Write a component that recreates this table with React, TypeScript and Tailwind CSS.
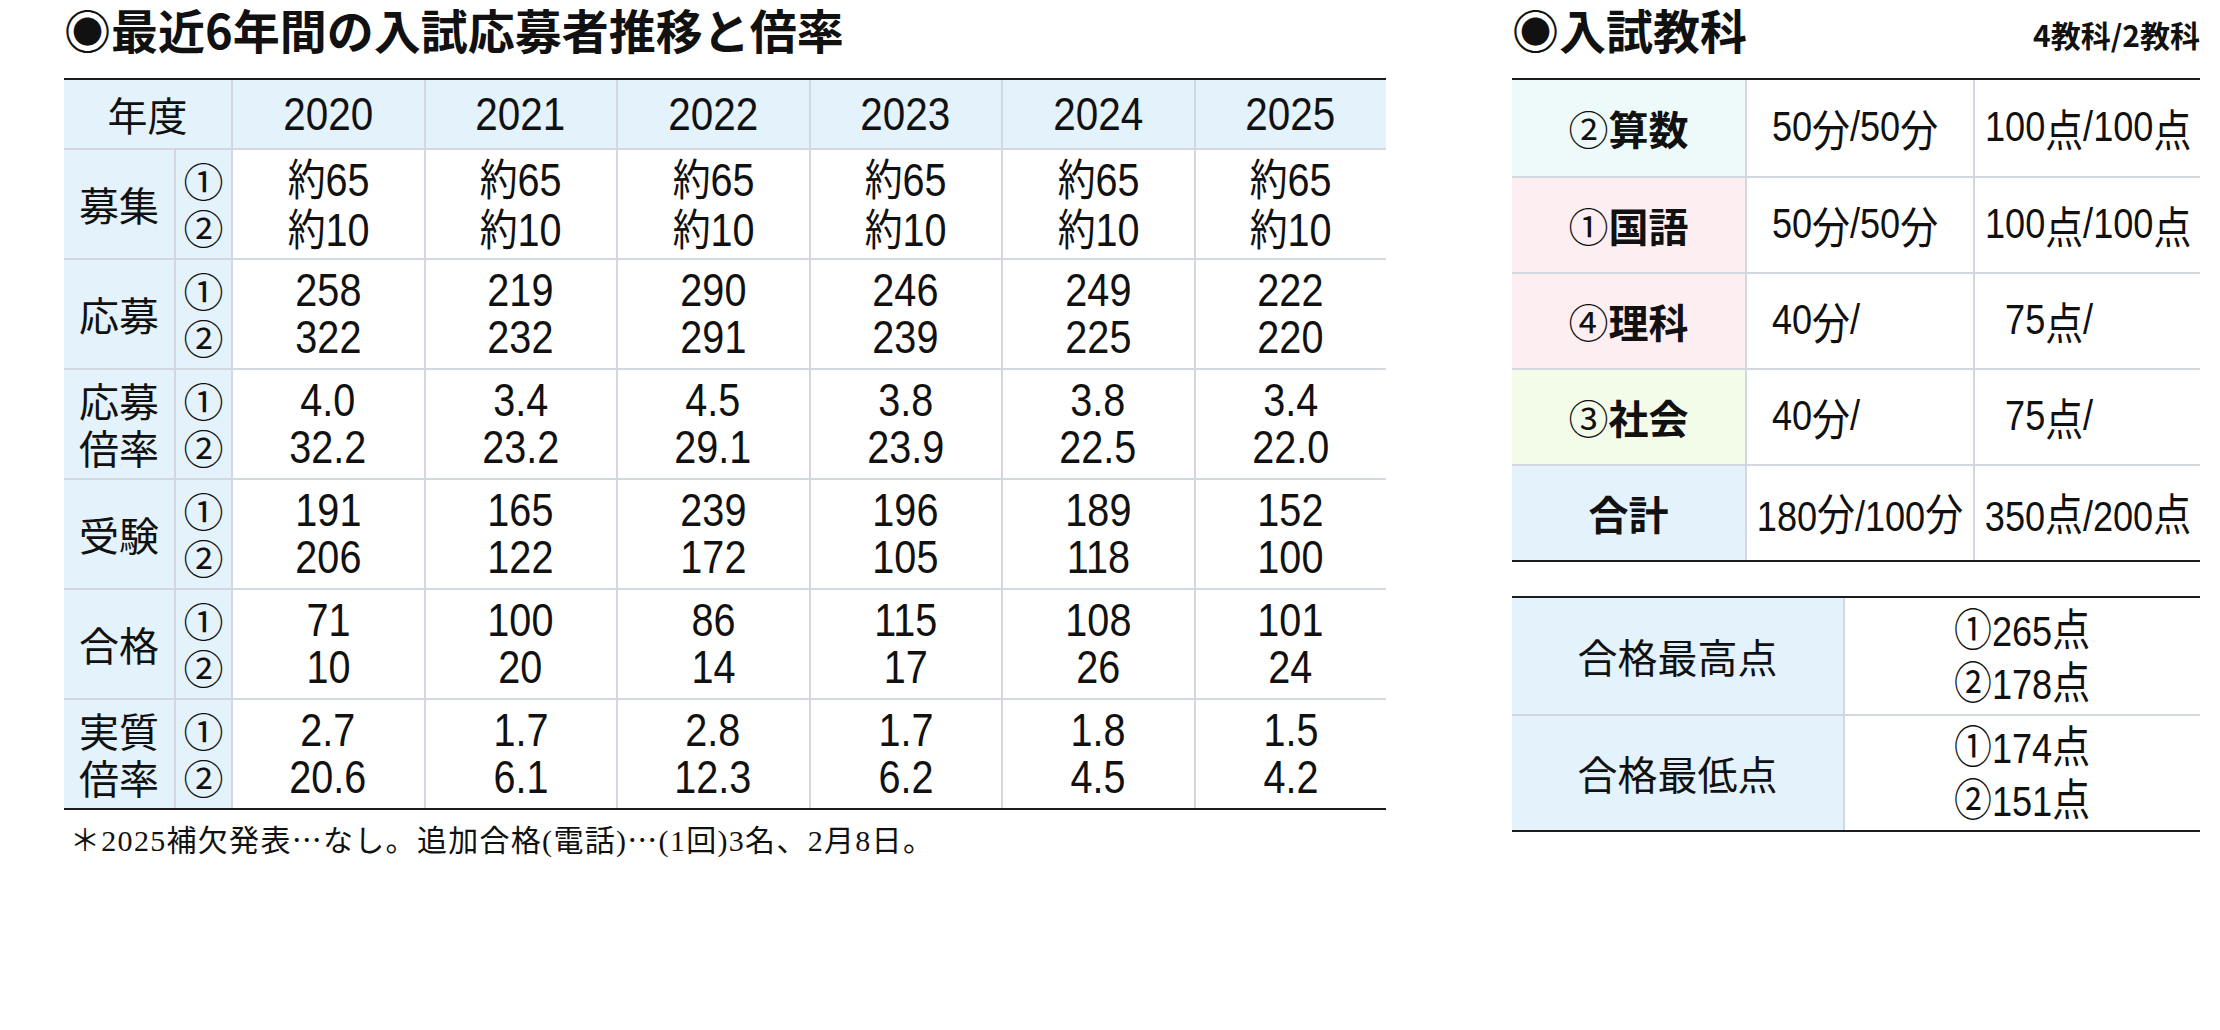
import React from "react";

const NUM = "font-['Liberation_Sans_Narrow','Liberation_Sans','Noto_Sans_CJK_JP',sans-serif]";
const JP = "font-['Noto_Sans_CJK_JP',sans-serif]";
const LINE = "border-[#d3d7df]";
// no narrow face installed, so squeeze the figures a little
const SQUEEZE = "shrink-0 whitespace-nowrap scale-x-[0.86]";

const years = ["2020", "2021", "2022", "2023", "2024", "2025"];

const rows = [
  {
    label: ["募集"],
    vals: [
      ["約65", "約10"],
      ["約65", "約10"],
      ["約65", "約10"],
      ["約65", "約10"],
      ["約65", "約10"],
      ["約65", "約10"],
    ],
  },
  {
    label: ["応募"],
    vals: [
      ["258", "322"],
      ["219", "232"],
      ["290", "291"],
      ["246", "239"],
      ["249", "225"],
      ["222", "220"],
    ],
  },
  {
    label: ["応募", "倍率"],
    vals: [
      ["4.0", "32.2"],
      ["3.4", "23.2"],
      ["4.5", "29.1"],
      ["3.8", "23.9"],
      ["3.8", "22.5"],
      ["3.4", "22.0"],
    ],
  },
  {
    label: ["受験"],
    vals: [
      ["191", "206"],
      ["165", "122"],
      ["239", "172"],
      ["196", "105"],
      ["189", "118"],
      ["152", "100"],
    ],
  },
  {
    label: ["合格"],
    vals: [
      ["71", "10"],
      ["100", "20"],
      ["86", "14"],
      ["115", "17"],
      ["108", "26"],
      ["101", "24"],
    ],
  },
  {
    label: ["実質", "倍率"],
    vals: [
      ["2.7", "20.6"],
      ["1.7", "6.1"],
      ["2.8", "12.3"],
      ["1.7", "6.2"],
      ["1.8", "4.5"],
      ["1.5", "4.2"],
    ],
  },
];

const subjects = [
  { no: "②", name: "算数", bg: "bg-[#edfaf9]", time: ["50分/", "50分"], score: ["100点/", "100点"] },
  { no: "①", name: "国語", bg: "bg-[#fdeef1]", time: ["50分/", "50分"], score: ["100点/", "100点"] },
  { no: "④", name: "理科", bg: "bg-[#fdeef1]", time: ["40分/", ""], score: ["75点/", ""] },
  { no: "③", name: "社会", bg: "bg-[#f3fce9]", time: ["40分/", ""], score: ["75点/", ""] },
];

function Mixed({ text }: { text: string }) {
  const parts = text.split(/([^\x00-\x7F]+)/).filter(Boolean);
  return (
    <>
      {parts.map((p, i) =>
        /[^\x00-\x7F]/.test(p) ? (
          <span key={i} className={`${JP} text-[44px]`}>
            {p}
          </span>
        ) : (
          <span key={i}>{p}</span>
        )
      )}
    </>
  );
}

function Split({ pair, lw, rw }: { pair: string[]; lw: string; rw: string }) {
  return (
    <div className={`flex ${SQUEEZE}`}>
      <div className={`${lw} flex shrink-0 justify-end`}>
        <Mixed text={pair[0]} />
      </div>
      <div className={`${rw} flex shrink-0 justify-start`}>
        <Mixed text={pair[1]} />
      </div>
    </div>
  );
}

export default function App() {
  return (
    <div className="flex h-[1030px] w-[2220px] bg-white text-[#111]">
      {/* left: applicants table */}
      <div className="ml-[64px] w-[1322px] shrink-0">
        <div className={`h-[78px] pt-[5px] text-[47px] font-bold leading-none ${JP}`}>
          ◉最近6年間の入試応募者推移と倍率
        </div>

        <div className="border-y-2 border-[#1c1c1c]">
          <div className="flex h-[68px] bg-[#e4f2fb]">
            <div className={`flex w-[167px] shrink-0 items-center justify-center text-[40px] ${JP}`}>
              年度
            </div>
            {years.map((y) => (
              <div
                key={y}
                className={`flex min-w-0 flex-1 items-center justify-center border-l-2 ${LINE} text-[47px] ${NUM}`}
              >
                <div className={SQUEEZE}>{y}</div>
              </div>
            ))}
          </div>

          {rows.map((row, ri) => (
            <div key={ri} className={`flex h-[110px] border-t-2 ${LINE}`}>
              <div
                className={`flex w-[110px] shrink-0 flex-col items-center justify-center bg-[#e4f2fb] text-[40px] leading-[47px] ${JP}`}
              >
                {row.label.map((l) => (
                  <div key={l}>{l}</div>
                ))}
              </div>
              <div
                className={`flex w-[57px] shrink-0 flex-col items-center justify-center border-l-2 ${LINE} bg-[#e4f2fb] text-[40px] leading-[47px] ${JP}`}
              >
                <div>①</div>
                <div>②</div>
              </div>
              {row.vals.map((v, ci) => (
                <div
                  key={ci}
                  className={`flex min-w-0 flex-1 items-center justify-center border-l-2 ${LINE} text-[46px] leading-[47px] ${NUM}`}
                >
                  <div className={`flex flex-col items-center ${SQUEEZE}`}>
                    <div>
                      <Mixed text={v[0]} />
                    </div>
                    <div>
                      <Mixed text={v[1]} />
                    </div>
                  </div>
                </div>
              ))}
            </div>
          ))}
        </div>

        <div className="mt-[13px] pl-[6px] font-['Liberation_Serif','Noto_Sans_CJK_JP',serif] text-[30px] leading-none tracking-[1.3px]">
          ＊2025補欠発表<span className={JP}>…</span>なし。追加合格(電話)<span className={JP}>…</span>
          (1回)3名、2月8日。
        </div>
      </div>

      {/* right: subjects */}
      <div className="ml-[126px] w-[688px] shrink-0">
        <div className={`flex h-[78px] items-start justify-between pt-[5px] leading-none ${JP}`}>
          <span className="text-[47px] font-bold">◉入試教科</span>
          <span className="mt-[14px] text-[30px] font-bold">4教科/2教科</span>
        </div>

        <div className="border-y-2 border-[#1c1c1c]">
          {subjects.map((s, i) => (
            <div key={s.name} className={`flex h-[96px] ${i > 0 ? `border-t-2 ${LINE}` : ""}`}>
              <div
                className={`flex w-[233px] shrink-0 items-center justify-center ${s.bg} text-[40px] ${JP}`}
              >
                <span>{s.no}</span>
                <span className="font-bold">{s.name}</span>
              </div>
              <div
                className={`flex w-[228px] shrink-0 items-center justify-center border-l-2 ${LINE} text-[42px] ${NUM}`}
              >
                <Split pair={s.time} lw="w-[104px]" rw="w-[104px]" />
              </div>
              <div
                className={`flex min-w-0 flex-1 items-center justify-center border-l-2 ${LINE} text-[42px] ${NUM}`}
              >
                <Split pair={s.score} lw="w-[127px]" rw="w-[115px]" />
              </div>
            </div>
          ))}
          <div className={`flex h-[96px] border-t-2 ${LINE}`}>
            <div
              className={`flex w-[233px] shrink-0 items-center justify-center bg-[#e4f2fb] text-[40px] font-bold ${JP}`}
            >
              合計
            </div>
            <div
              className={`flex w-[228px] shrink-0 items-center justify-center border-l-2 ${LINE} text-[42px] ${NUM}`}
            >
              <div className={SQUEEZE}>
                <Mixed text="180分/100分" />
              </div>
            </div>
            <div
              className={`flex min-w-0 flex-1 items-center justify-center border-l-2 ${LINE} text-[42px] ${NUM}`}
            >
              <div className={SQUEEZE}>
                <Mixed text="350点/200点" />
              </div>
            </div>
          </div>
        </div>

        <div className="mt-[34px] border-y-2 border-[#1c1c1c]">
          {[
            { label: "合格最高点", v: ["①265点", "②178点"] },
            { label: "合格最低点", v: ["①174点", "②151点"] },
          ].map((r, i) => (
            <div key={r.label} className={`flex h-[116px] ${i > 0 ? `border-t-2 ${LINE}` : ""}`}>
              <div
                className={`flex w-[331px] shrink-0 items-center justify-center bg-[#e4f2fb] text-[40px] ${JP}`}
              >
                {r.label}
              </div>
              <div
                className={`flex min-w-0 flex-1 items-center justify-center border-l-2 ${LINE} text-[42px] leading-[49px] ${NUM}`}
              >
                <div className={`flex flex-col items-center ${SQUEEZE}`}>
                  {r.v.map((t) => (
                    <div key={t}>
                      <Mixed text={t} />
                    </div>
                  ))}
                </div>
              </div>
            </div>
          ))}
        </div>
      </div>
    </div>
  );
}
